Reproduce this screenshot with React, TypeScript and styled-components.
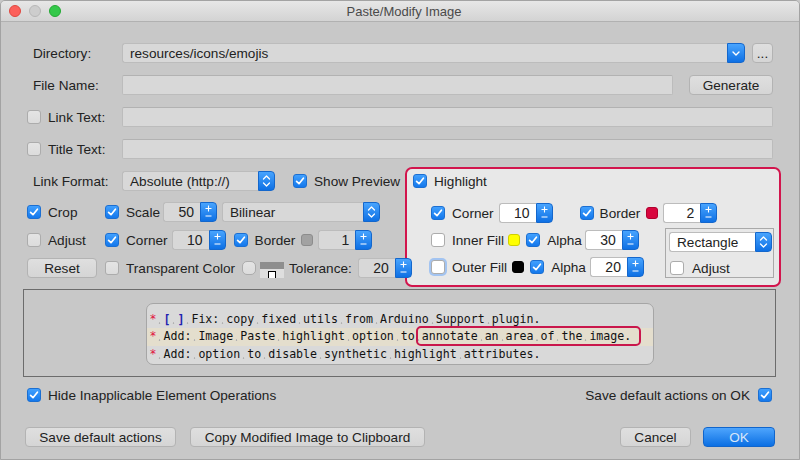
import React from "react";
import styled, { createGlobalStyle, css } from "styled-components";

const GlobalStyle = createGlobalStyle`
  html, body { margin: 0; padding: 0; background: #c8c8c8; }
  body {
    font-family: "Liberation Sans", Arial, sans-serif;
    font-size: 13.6px;
    color: #222;
  }
  * { box-sizing: border-box; }
`;

const Window = styled.div`
  width: 800px;
  height: 460px;
  display: flex;
  flex-direction: column;
  background: #c8c8c8;
  border: 1px solid #a3a3a3;
  border-radius: 5px 5px 0 0;
  overflow: hidden;
`;

const TitleBar = styled.div`
  height: 21px;
  flex: none;
  display: grid;
  grid-template-columns: 1fr auto 1fr;
  align-items: center;
  padding-left: 8px;
  background: linear-gradient(#e7e7e7, #d3d3d3);
  border-bottom: 1px solid #b1b1b1;
`;

const Lights = styled.div`
  display: flex;
  gap: 8px;
`;

const Light = styled.span<{ $c: string; $b: string }>`
  width: 12px;
  height: 12px;
  border-radius: 50%;
  background: ${(p) => p.$c};
  border: 1px solid ${(p) => p.$b};
`;

const Title = styled.div`
  font-size: 13px;
  color: #4a4a4a;
`;

const Body = styled.div`
  flex: 1;
  display: flex;
  flex-direction: column;
  padding: 21px 18px 0 22px;
`;

const Row = styled.div<{ $mt?: number; $mr?: number; $ml?: number; $h?: number }>`
  display: flex;
  align-items: center;
  height: ${(p) => p.$h ?? 20}px;
  margin-top: ${(p) => p.$mt ?? 0}px;
  margin-right: ${(p) => p.$mr ?? 0}px;
  margin-left: ${(p) => p.$ml ?? 0}px;
  flex: none;
`;

const Label = styled.span`
  width: 89px;
  margin-left: 10px;
  flex: none;
  white-space: nowrap;
`;

const Text = styled.span<{ $ml?: number }>`
  margin-left: ${(p) => p.$ml ?? 0}px;
  white-space: nowrap;
  flex: none;
`;

const CheckLabel = styled.span<{ $w?: number; $ml?: number; $gap?: number }>`
  display: flex;
  align-items: center;
  gap: ${(p) => p.$gap ?? 7}px;
  flex: none;
  white-space: nowrap;
  width: ${(p) => (p.$w ? `${p.$w}px` : "auto")};
  margin-left: ${(p) => p.$ml ?? 0}px;
`;

const Field = styled.div<{ $w?: number }>`
  ${(p) => (p.$w ? css`width: ${p.$w}px; flex: none;` : css`flex: 1;`)}
  height: 20px;
  background: #d8d8d8;
  border: 1px solid #bcbcbc;
  border-top-color: #b2b2b2;
  border-radius: 2px;
  padding: 0 6px;
  display: flex;
  align-items: center;
  white-space: nowrap;
`;

const ComboWrap = styled.div<{ $w?: number; $ml?: number }>`
  display: flex;
  height: 20px;
  ${(p) => (p.$w ? css`width: ${p.$w}px; flex: none;` : css`flex: 1;`)}
  margin-left: ${(p) => p.$ml ?? 0}px;
`;

const ComboText = styled.div<{ $light?: boolean }>`
  flex: 1;
  background: ${(p) => (p.$light ? "#ffffff" : "#d8d8d8")};
  border: 1px solid #bcbcbc;
  border-right: none;
  border-radius: 3px 0 0 3px;
  padding: 0 7px;
  display: flex;
  align-items: center;
  white-space: nowrap;
`;

const BlueBtn = styled.div<{ $w: number }>`
  width: ${(p) => p.$w}px;
  flex: none;
  background: linear-gradient(#48a4fe, #0e70e4);
  border: 1px solid #1467cc;
  border-radius: 0 4px 4px 0;
  display: flex;
  align-items: center;
  justify-content: center;
`;

const SpinWrap = styled.div<{ $ml?: number }>`
  display: flex;
  height: 20px;
  flex: none;
  margin-left: ${(p) => p.$ml ?? 0}px;
`;

const SpinField = styled.div<{ $light?: boolean }>`
  width: 37px;
  background: ${(p) => (p.$light ? "#ffffff" : "#d8d8d8")};
  border: 1px solid #bcbcbc;
  border-right: none;
  border-radius: 3px 0 0 3px;
  display: flex;
  align-items: center;
  justify-content: flex-end;
  padding-right: 6px;
  font-size: 14px;
`;

const Btn = styled.div<{ $w: number; $primary?: boolean; $ml?: number }>`
  width: ${(p) => p.$w}px;
  height: 20px;
  flex: none;
  margin-left: ${(p) => p.$ml ?? 0}px;
  display: flex;
  align-items: center;
  justify-content: center;
  border-radius: 4px;
  white-space: nowrap;
  ${(p) =>
    p.$primary
      ? css`
          background: linear-gradient(#4ea5fd, #0b6fe3);
          border: 1px solid #1165cb;
          color: #d6e6f9;
        `
      : css`
          background: linear-gradient(#dfdfdf, #d5d5d5);
          border: 1px solid #b3b3b3;
          color: #222;
        `}
`;

const Box = styled.span<{ $on?: boolean; $light?: boolean; $focus?: boolean; $round?: boolean; $ml?: number }>`
  width: 14px;
  height: 14px;
  flex: none;
  display: inline-flex;
  align-items: center;
  justify-content: center;
  margin-left: ${(p) => p.$ml ?? 0}px;
  border-radius: ${(p) => (p.$round ? 5 : 3)}px;
  ${(p) =>
    p.$on
      ? css`
          background: linear-gradient(#41a0fe, #1478ec);
          border: 1px solid #1b6fd2;
        `
      : css`
          background: ${p.$light ? "#ffffff" : "linear-gradient(#e4e4e4, #dcdcdc)"};
          border: 1px solid #acacac;
        `}
  ${(p) =>
    p.$focus &&
    css`
      box-shadow: 0 0 0 2px #a3c4f1;
    `}
`;

const Swatch = styled.span<{ $c: string; $b: string; $ml?: number }>`
  width: 12px;
  height: 12px;
  flex: none;
  border-radius: 3px;
  background: ${(p) => p.$c};
  border: 1px solid ${(p) => p.$b};
  margin-left: ${(p) => p.$ml ?? 0}px;
`;

const ColorWell = styled.span<{ $ml?: number }>`
  width: 24px;
  height: 16px;
  flex: none;
  margin-left: ${(p) => p.$ml ?? 0}px;
  margin-top: 4px;
  display: flex;
  flex-direction: column;
`;

const WellTop = styled.span`
  height: 7px;
  background: #8e8e8e;
`;

const WellBottom = styled.span`
  flex: 1;
  background: #dedede;
  display: flex;
  justify-content: center;
  align-items: flex-end;
`;

const WellMark = styled.span`
  width: 8px;
  height: 7px;
  background: #fff;
  border: 1px solid #000;
  border-bottom: none;
`;

const Options = styled.div`
  display: flex;
  height: 120px;
  margin-top: 8px;
  flex: none;
`;

const LeftCol = styled.div`
  width: 382px;
  flex: none;
  padding-top: 4px;
  position: relative;
  z-index: 1;
`;

const OptGrid = styled.div`
  display: grid;
  grid-template-columns: 70px 1fr;
  grid-auto-rows: 20px;
  column-gap: 8px;
  row-gap: 8px;
  margin: 11px 0 0 4px;
`;

const Cluster = styled.div`
  display: flex;
  align-items: center;
  white-space: nowrap;
`;

const HighlightBox = styled.div`
  flex: 1;
  border: 2px solid #d2154d;
  border-radius: 7px;
  background: #e8e8e8;
  padding: 5px 5px 0 6px;
  display: flex;
  flex-direction: column;
`;

const HRows = styled.div`
  margin: 15px 0 0 18px;
  display: flex;
  flex-direction: column;
`;

const Lower = styled.div`
  display: flex;
  margin-top: 7px;
`;

const LowerLeft = styled.div`
  display: flex;
  flex-direction: column;
  gap: 7px;
`;

const SubPanel = styled.div`
  margin-left: auto;
  margin-top: -2px;
  width: 109px;
  height: 50px;
  border: 1px solid #a9a9a9;
  padding: 3px;
  display: flex;
  flex-direction: column;
`;

const Preview = styled.div`
  margin: 2px 5px 0 0;
  height: 88px;
  flex: none;
  border: 1px solid #6c6c6c;
  display: flex;
  align-items: center;
  justify-content: center;
`;

const CodeImage = styled.div`
  width: 508px;
  height: 62px;
  margin-top: 1px;
  background: #d9d9d9;
  border: 1px solid #a6a6a6;
  border-radius: 7px;
  padding-top: 7px;
  font-family: "DejaVu Sans Mono", "Liberation Mono", monospace;
  font-size: 11.6px;
  color: #111;
`;

const CodeLine = styled.div<{ $hl?: boolean }>`
  height: 17.5px;
  line-height: 17.5px;
  padding-left: 3px;
  white-space: pre;
  background: ${(p) => (p.$hl ? "#e4decd" : "transparent")};
`;

const Star = styled.span`
  color: #e0103c;
`;

const Brk = styled.span`
  color: #1f1fb0;
  font-weight: bold;
`;

const Ws = styled.span`
  background: radial-gradient(circle at 50% 80%, #b0b0b0 0 0.6px, transparent 1.1px);
`;

const Annot = styled.span`
  position: relative;
  &::before {
    content: "";
    position: absolute;
    left: -6px;
    right: -10px;
    top: -3px;
    bottom: -3px;
    border: 2px solid #c9174c;
    border-radius: 5px;
  }
`;

const Spacer = styled.div`
  flex: 1;
`;

const CheckSvg = () => (
  <svg width="12" height="12" viewBox="0 0 12 12">
    <path d="M2.6 6.3 L5 8.7 L9.4 3.2" fill="none" stroke="#fff" strokeWidth="1.7" strokeLinecap="round" strokeLinejoin="round" />
  </svg>
);

const Check: React.FC<{ on?: boolean; light?: boolean; focus?: boolean; round?: boolean; ml?: number }> = ({
  on,
  light,
  focus,
  round,
  ml,
}) => (
  <Box $on={on} $light={light} $focus={focus} $round={round} $ml={ml}>
    {on && <CheckSvg />}
  </Box>
);

const PlusMinus = () => (
  <svg width="15" height="18" viewBox="0 0 15 18">
    <path d="M4.5 5.5 H10.5 M7.5 2.5 V8.5 M4.5 13 H10.5" stroke="#fff" strokeWidth="1.1" fill="none" />
  </svg>
);

const UpDown = () => (
  <svg width="15" height="18" viewBox="0 0 15 18">
    <path d="M4.5 7 L7.5 4 L10.5 7 M4.5 11 L7.5 14 L10.5 11" stroke="#fff" strokeWidth="1.3" fill="none" strokeLinecap="round" strokeLinejoin="round" />
  </svg>
);

const Down = () => (
  <svg width="16" height="18" viewBox="0 0 16 18">
    <path d="M5 8 L8 11 L11 8" stroke="#fff" strokeWidth="1.4" fill="none" strokeLinecap="round" strokeLinejoin="round" />
  </svg>
);

const Spin: React.FC<{ value: string; light?: boolean; ml?: number }> = ({ value, light, ml }) => (
  <SpinWrap $ml={ml}>
    <SpinField $light={light}>{value}</SpinField>
    <BlueBtn $w={17}>
      <PlusMinus />
    </BlueBtn>
  </SpinWrap>
);

const Combo: React.FC<{ text: string; w?: number; light?: boolean; ml?: number; down?: boolean }> = ({
  text,
  w,
  light,
  ml,
  down,
}) => (
  <ComboWrap $w={w} $ml={ml}>
    <ComboText $light={light}>{text}</ComboText>
    <BlueBtn $w={down ? 18 : 17}>{down ? <Down /> : <UpDown />}</BlueBtn>
  </ComboWrap>
);

const Code: React.FC<{ text: string }> = ({ text }) => {
  const parts = text.split(" ");
  return (
    <>
      {parts.map((w, i) => (
        <React.Fragment key={i}>
          {i > 0 && <Ws> </Ws>}
          {w}
        </React.Fragment>
      ))}
    </>
  );
};

export default function App() {
  return (
    <>
      <GlobalStyle />
      <Window>
        <TitleBar>
          <Lights>
            <Light $c="#fc605b" $b="#de4840" />
            <Light $c="#cdcdcd" $b="#b7b7b7" />
            <Light $c="#34c84a" $b="#24a934" />
          </Lights>
          <Title>Paste/Modify Image</Title>
          <span />
        </TitleBar>
        <Body>
          <Row $mr={8}>
            <Label>Directory:</Label>
            <Combo text="resources/icons/emojis" down />
            <Btn $w={21} $ml={7}>...</Btn>
          </Row>
          <Row $mt={12} $mr={8}>
            <Label>File Name:</Label>
            <Field />
            <Btn $w={84} $ml={16}>Generate</Btn>
          </Row>
          <Row $mt={12} $mr={8}>
            <CheckLabel $w={95} $ml={4}>
              <Check />
              Link Text:
            </CheckLabel>
            <Field />
          </Row>
          <Row $mt={12} $mr={8}>
            <CheckLabel $w={95} $ml={4}>
              <Check />
              Title Text:
            </CheckLabel>
            <Field />
          </Row>

          <Options>
            <LeftCol>
              <Row>
                <Label>Link Format:</Label>
                <Combo text="Absolute (http://)" w={153} />
                <CheckLabel $ml={18}>
                  <Check on />
                  Show Preview
                </CheckLabel>
              </Row>
              <OptGrid>
                <CheckLabel>
                  <Check on />
                  Crop
                </CheckLabel>
                <Cluster>
                  <Check on />
                  <Text $ml={7}>Scale</Text>
                  <Spin value="50" ml={3} />
                  <Combo text="Bilinear" w={158} ml={5} />
                </Cluster>
                <CheckLabel>
                  <Check />
                  Adjust
                </CheckLabel>
                <Cluster>
                  <Check on />
                  <Text $ml={7}>Corner</Text>
                  <Spin value="10" ml={4} />
                  <Check on ml={8} />
                  <Text $ml={7}>Border</Text>
                  <Swatch $c="#a2a2a2" $b="#8c8c8c" $ml={6} />
                  <Spin value="1" ml={5} />
                </Cluster>
                <Btn $w={70}>Reset</Btn>
                <Cluster>
                  <Check />
                  <Text $ml={7}>Transparent Color</Text>
                  <Check round ml={7} />
                  <ColorWell $ml={4}>
                    <WellTop />
                    <WellBottom>
                      <WellMark />
                    </WellBottom>
                  </ColorWell>
                  <Text $ml={5}>Tolerance:</Text>
                  <Spin value="20" ml={6} />
                </Cluster>
              </OptGrid>
            </LeftCol>

            <HighlightBox>
              <Row $h={14}>
                <CheckLabel>
                  <Check on />
                  Highlight
                </CheckLabel>
              </Row>
              <HRows>
                <Row>
                  <Check on />
                  <Text $ml={7}>Corner</Text>
                  <Spin value="10" light ml={5} />
                  <Check on ml={27} />
                  <Text $ml={6}>Border</Text>
                  <Swatch $c="#d8063e" $b="#b0002e" $ml={6} />
                  <Spin value="2" light ml={5} />
                </Row>
                <Lower>
                  <LowerLeft>
                    <Row>
                      <Check light />
                      <Text $ml={7}>Inner Fill</Text>
                      <Swatch $c="#ffff00" $b="#cfcf00" $ml={4} />
                      <Check on ml={6} />
                      <Text $ml={7}>Alpha</Text>
                      <Spin value="30" light ml={3} />
                    </Row>
                    <Row>
                      <Check light focus />
                      <Text $ml={7}>Outer Fill</Text>
                      <Swatch $c="#000000" $b="#000000" $ml={5} />
                      <Check on ml={6} />
                      <Text $ml={7}>Alpha</Text>
                      <Spin value="20" light ml={4} />
                    </Row>
                  </LowerLeft>
                  <SubPanel>
                    <Combo text="Rectangle" light w={103} />
                    <Row $h={14} $mt={9} $ml={1}>
                      <CheckLabel $w={90} $gap={8}>
                        <Check light />
                        Adjust
                      </CheckLabel>
                    </Row>
                  </SubPanel>
                </Lower>
              </HRows>
            </HighlightBox>
          </Options>

          <Preview>
            <CodeImage>
              <CodeLine>
                <Star>*</Star>
                <Ws> </Ws>
                <Brk>[</Brk>
                <Ws> </Ws>
                <Brk>]</Brk>
                <Ws> </Ws>
                <Code text="Fix: copy fixed utils from Arduino Support plugin." />
              </CodeLine>
              <CodeLine $hl>
                <Star>*</Star>
                <Ws> </Ws>
                <Code text="Add: Image Paste highlight option to" />
                <Ws> </Ws>
                <Annot>
                  <Code text="annotate an area of the image." />
                </Annot>
              </CodeLine>
              <CodeLine>
                <Star>*</Star>
                <Ws> </Ws>
                <Code text="Add: option to disable synthetic highlight attributes." />
              </CodeLine>
            </CodeImage>
          </Preview>

          <Row $h={14} $mt={11} $ml={4} $mr={9}>
            <CheckLabel>
              <Check on />
              Hide Inapplicable Element Operations
            </CheckLabel>
            <Spacer />
            <CheckLabel $gap={8}>
              Save default actions on OK
              <Check on />
            </CheckLabel>
          </Row>

          <Row $mt={25} $ml={2} $mr={6}>
            <Btn $w={151}>Save default actions</Btn>
            <Btn $w={235} $ml={14}>Copy Modified Image to Clipboard</Btn>
            <Spacer />
            <Btn $w={71}>Cancel</Btn>
            <Btn $w={72} $ml={12} $primary>OK</Btn>
          </Row>
        </Body>
      </Window>
    </>
  );
}
